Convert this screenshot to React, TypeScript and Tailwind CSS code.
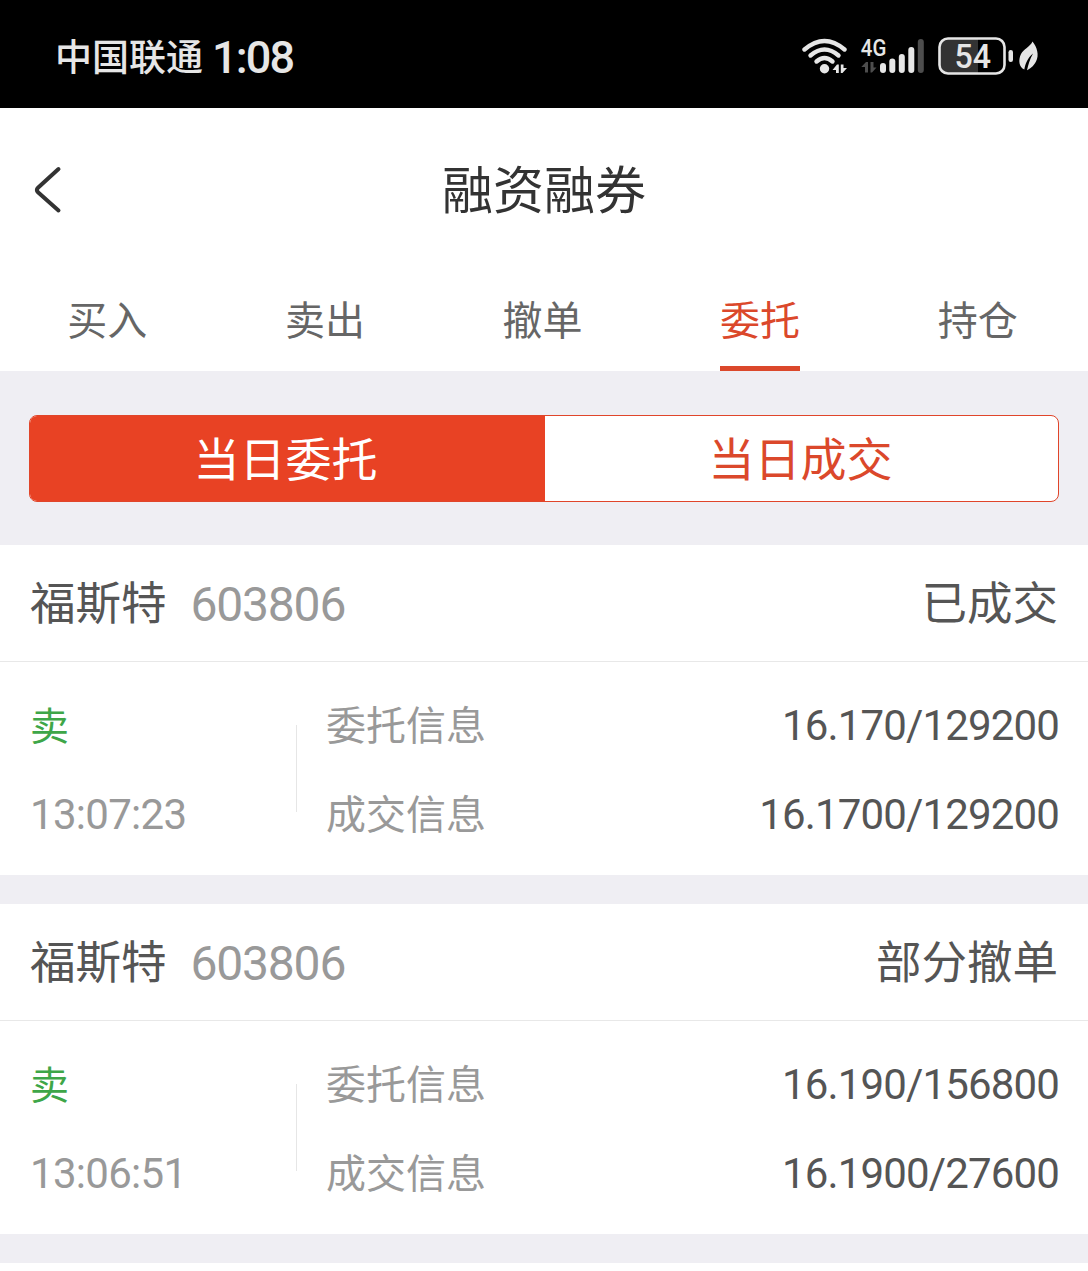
import type { ReactNode } from 'react';

interface Order {
  name: string;
  code: string;
  status: string;
  side: string;
  time: string;
  entrust: string;
  deal: string;
}

const tabs = ['买入', '卖出', '撤单', '委托', '持仓'];

const orders: Order[] = [
  {
    name: '福斯特',
    code: '603806',
    status: '已成交',
    side: '卖',
    time: '13:07:23',
    entrust: '16.170/129200',
    deal: '16.1700/129200',
  },
  {
    name: '福斯特',
    code: '603806',
    status: '部分撤单',
    side: '卖',
    time: '13:06:51',
    entrust: '16.190/156800',
    deal: '16.1900/27600',
  },
];

function Digits({ children, className }: { children: ReactNode; className: string }) {
  return <span className={`font-['Roboto','Noto_Sans_CJK_SC',sans-serif] ${className}`}>{children}</span>;
}

function StatusIcons() {
  return (
    <svg
      width="250"
      height="48"
      viewBox="800 32 250 48"
      fill="#e6e6e6"
      className="block font-['Roboto',sans-serif]"
    >
      {/* Wi-Fi */}
      <g fill="none" stroke="#e6e6e6" strokeWidth="4.4" strokeLinecap="round">
        <path d="M804.500 49.500Q824.500 32.500 844.500 49.500" />
        <path d="M810.500 55.500Q824.500 43.500 838.500 55.500" />
        <path d="M816.500 61.500Q824.500 54.500 832.500 61.500" />
      </g>
      <circle cx="824.500" cy="68.700" r="4.700" />
      <path d="M837 64.500h1.800V73h-2.800v-3h-3.500zM840.800 64.500h2.700v3.500h3.500L842.500 73h-1.700z" />
      {/* Mobile signal */}
      <text x="860.800" y="55.500" fontSize="23" fontWeight="500" textLength="25.500" lengthAdjust="spacingAndGlyphs">
        4G
      </text>
      <path fill="#4d4d4d" d="M866 62h2v10.500h-3V67h-3.700zM870.500 62h3v5.500h3L872 72.500h-1.500z" />
      <rect x="880" y="63" width="6" height="10" rx="3" />
      <rect x="889.300" y="58.500" width="6" height="14.500" rx="3" />
      <rect x="898.800" y="54" width="6" height="19" rx="3" />
      <rect x="908.300" y="47" width="6" height="26" rx="3" />
      <rect x="917.800" y="39" width="6" height="34" rx="3" fill="#4d4d4d" />
      {/* Battery */}
      <path fill="#333333" d="M948 39h30v34h-30a8 8 0 0 1-8-8V47a8 8 0 0 1 8-8z" />
      <rect x="939.500" y="38.500" width="65" height="35" rx="8.500" fill="none" stroke="#e6e6e6" strokeWidth="2.600" />
      <text x="954.500" y="68" fontSize="33" fontWeight="500" textLength="36.500" lengthAdjust="spacingAndGlyphs">
        54
      </text>
      <rect x="1008.500" y="50" width="4.500" height="12" rx="2.200" />
      {/* Power-saving leaf */}
      <path d="M1032.500 41.500C1037 47 1039.500 55 1036 61.500C1033.500 66.500 1029.500 69 1027 70.300C1028.300 65 1029.500 59.500 1033 53.500C1027.500 58 1025.500 63.500 1024.300 69.500C1019 67.500 1018 60 1021 54C1023.500 49 1030 47 1032.500 41.500z" />
    </svg>
  );
}

function OrderCard({ order }: { order: Order }) {
  return (
    <section className="h-[330px] bg-white">
      <div className="flex h-[117px] items-center justify-between border-b border-[#e8e8e8] px-[30px] text-[45.500px] text-[#555555]">
        <div className="flex items-center">
          <span className="pb-[5px]">{order.name}</span>
          <Digits className="ml-6 pt-[3px] text-[48px] tracking-[-1.200px] text-[#999999]">{order.code}</Digits>
        </div>
        <span className="pb-[5px]">{order.status}</span>
      </div>
      <div className="flex h-[213px] pt-[17px] pr-[29px] pl-[30px] text-[40px] leading-[89px]">
        <div className="flex w-[266px] flex-col text-[#999999]">
          <span className="text-[39px] text-[#3ea648]">{order.side}</span>
          <Digits className="pt-[2px] text-[42px] tracking-[-0.700px]">{order.time}</Digits>
        </div>
        <div className="mt-[46px] h-[87px] w-px bg-[#e6e6e6]" />
        <div className="ml-[29px] flex h-[178px] flex-1 justify-between">
          <div className="flex flex-col text-[#999999]">
            <span>委托信息</span>
            <span>成交信息</span>
          </div>
          <div className="flex flex-col pt-[2px] text-right text-[#555555]">
            <Digits className="text-[42px] tracking-[-0.850px]">{order.entrust}</Digits>
            <Digits className="text-[42px] tracking-[-0.850px]">{order.deal}</Digits>
          </div>
        </div>
      </div>
    </section>
  );
}

export default function App() {
  return (
    <main className="flex h-[1271px] w-[1088px] flex-col overflow-hidden bg-white font-['Noto_Sans_CJK_SC',sans-serif]">
      <div className="flex h-[108px] items-center justify-between bg-black pr-[38px] pb-1 pl-[55px] text-[#e6e6e6]">
        <div className="flex items-center gap-[9px] pt-2">
          <span className="text-[37px] font-medium">中国联通</span>
          <Digits className="pt-1 text-[45px] font-medium tracking-[-1.800px]">1:08</Digits>
        </div>
        <div className="mt-2">
          <StatusIcons />
        </div>
      </div>

      <header className="grid h-[164px] grid-cols-[1fr_auto_1fr] items-center">
        <button className="pl-[30px]" aria-label="返回">
          <svg width="36" height="52" viewBox="0 0 36 52" fill="none">
            <path
              d="M28.500 5L8 23.700Q5.700 26 8 28.300L28.500 46.500"
              stroke="#333333"
              strokeWidth="4"
              strokeLinecap="round"
            />
          </svg>
        </button>
        <h1 className="pb-1.5 text-[51px] text-[#333333]">融资融券</h1>
      </header>

      <nav className="-ml-[1.500px] grid h-[99px] w-[1088px] grid-cols-5 text-[40px] leading-[93px]">
        {tabs.map((tab) => (
          <div key={tab} className="flex justify-center">
            <span
              className={
                tab === '委托'
                  ? 'h-[99px] w-20 border-b-[5px] border-[#db482b] text-center whitespace-nowrap text-[#db482b]'
                  : 'text-[#666666]'
              }
            >
              {tab}
            </span>
          </div>
        ))}
      </nav>

      <div className="h-[174px] bg-[#efeef3] px-[29px] pt-11">
        <div className="grid h-[87px] w-[1030px] grid-cols-[515px_1fr] overflow-hidden rounded-lg border border-[#e0452a] bg-white text-center text-[46px] leading-[81px]">
          <div className="bg-[#e84224] pr-1 text-white">当日委托</div>
          <div className="pr-0.5 text-[#db482b]">当日成交</div>
        </div>
      </div>

      <div className="flex flex-col gap-[29px] bg-[#efeef3] pb-[29px]">
        {orders.map((order) => (
          <OrderCard key={order.time} order={order} />
        ))}
      </div>
    </main>
  );
}
